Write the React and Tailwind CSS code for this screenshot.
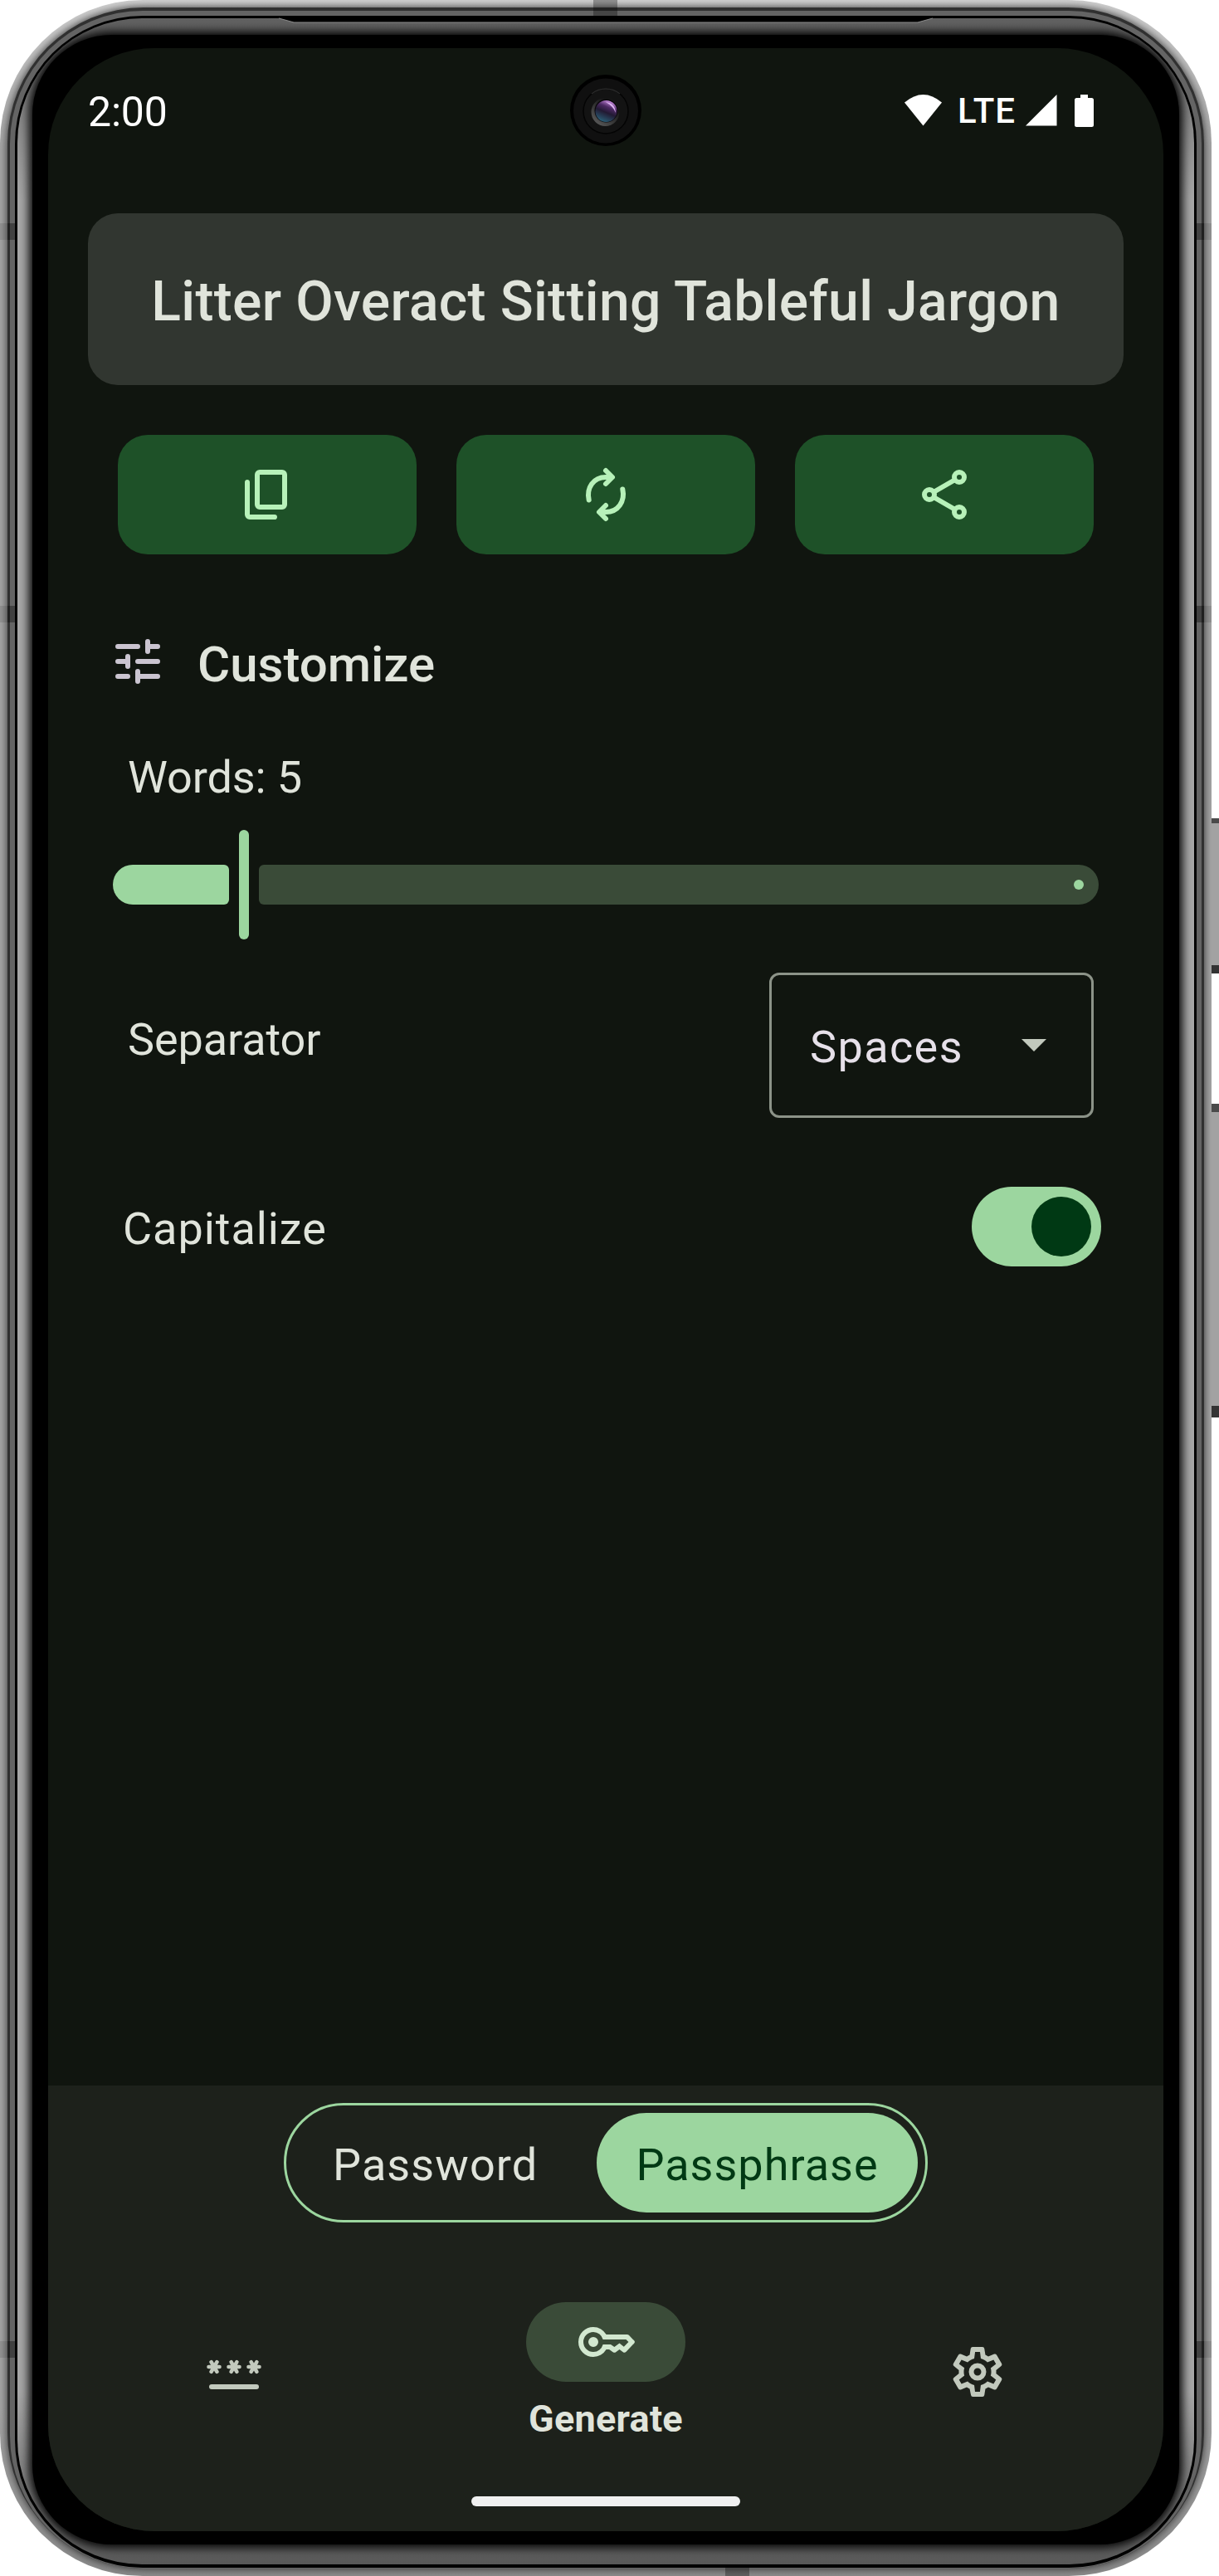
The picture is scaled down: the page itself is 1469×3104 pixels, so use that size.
import React from "react";

const CopyIcon = () => (
  <svg className="size-[72px]" viewBox="0 -960 960 960" fill="#b7f1b9">
    <path d="M360-240q-33 0-56.500-23.500T280-320v-480q0-33 23.500-56.500T360-880h360q33 0 56.500 23.500T800-800v480q0 33-23.500 56.500T720-240H360Zm0-80h360v-480H360v480ZM200-80q-33 0-56.500-23.500T120-160v-520q0-17 11.500-28.500T160-720q17 0 28.500 11.500T200-680v520h400q17 0 28.500 11.500T640-120q0 17-11.500 28.500T600-80H200Z" />
  </svg>
);

const RefreshIcon = () => (
  <svg className="size-[72px]" viewBox="0 0 72 72" fill="none" stroke="#b7f1b9" strokeWidth="6" strokeLinecap="round" strokeLinejoin="round">
    <path d="M15.700 42.500C12.500 28 21 15 36 15H43M36 7l8 8-8 8" />
    <path d="M56.300 29.500C59.500 44 51 57 36 57H29M36 65l-8-8 8-8" />
  </svg>
);

const ShareIcon = () => (
  <svg className="size-[72px]" viewBox="0 0 72 72" fill="none" stroke="#b7f1b9" strokeWidth="6">
    <path d="M23 33 49 18M23 39 49 54" />
    <circle cx="18" cy="36" r="6" />
    <circle cx="54" cy="15" r="6" />
    <circle cx="54" cy="57" r="6" />
  </svg>
);

const TuneIcon = () => (
  <svg className="size-[72px]" viewBox="0 0 72 72" fill="none" stroke="#cac4d0" strokeWidth="6" strokeLinecap="round">
    <path d="M12 18H36M48 12V24M48 18H60M12 36H24M24 30V42M36 36H60M12 54H24M36 48V60M36 54H60" />
  </svg>
);

const Asterisk = ({ x }) => (
  <path d={`M${x - 6.500} 30h13M${x - 3.400} 24.200l6.800 11.600M${x + 3.400} 24.200l-6.800 11.600`} strokeWidth="4.600" />
);

const PasswordIcon = () => (
  <svg className="size-[72px]" viewBox="0 0 72 72" fill="none" stroke="#c2c9bd" strokeLinecap="round">
    <Asterisk x={12} />
    <Asterisk x={36} />
    <Asterisk x={60} />
    <path d="M9 54H63" strokeWidth="6" />
  </svg>
);

const KeyIcon = () => (
  <svg className="size-[72px]" viewBox="0 -960 960 960" fill="#d2e8d0">
    <path d="M280-400q-33 0-56.500-23.500T200-480q0-33 23.500-56.500T280-560q33 0 56.500 23.500T360-480q0 33-23.500 56.500T280-400Zm0 160q-100 0-170-70T40-480q0-100 70-170t170-70q67 0 121.500 33t86.500 87H823q16 0 28 11l84 86q22 23 0 46L808-324q-24 22-50 6l-58-42-58 42q-22 14-46 0l-61-42h-47q-32 54-86.500 87T280-240Zm0-80q56 0 98.500-34t56.500-86h125l58 41 82-61 71 55 75-75-40-40H435q-14-52-56.500-86T280-640q-66 0-113 47t-47 113q0 66 47 113t113 47Z" />
  </svg>
);

const GearIcon = () => (
  <svg className="size-[72px]" viewBox="0 -960 960 960" fill="#c2c9bd">
    <path d="M405-80q-27 0-31-26l-20-102q-13-5-24.500-12T307-235l-95 40q-25 9-40-14L92-347q-12-24 8-40l81-66q-1-7-1-13.500v-27q0-6.500 1-13.500l-81-66q-20-16-8-40l80-138q15-23 40-14l95 40q11-8 23-15t24-12l16-102q5-26 31-26h158q27 0 31 26l16 102q13 5 24.500 12t22.500 15l95-40q25-9 40 14l80 138q12 24-8 40l-81 66q1 7 1 13.500v27q0 6.500-2 13.500l82 66q20 16 8 40l-80 138q-15 23-40 14l-95-40q-11 8-23 15t-24 12l-16 102q-4 26-31 26H405Zm35-80h79l14-106q31-8 57.500-23.500T639-327l99 41 39-68-86-65q5-14 7-29.500t2-31.500q0-16-2-31.500t-7-29.500l86-65-39-68-99 42q-22-23-48.500-38.500T533-694l-13-106h-79l-14 106q-31 8-57.500 23.500T321-633l-99-41-39 68 86 64q-5 15-7 30t-2 32q0 16 2 31t7 30l-86 65 39 68 99-42q22 23 48.500 38.500T427-266l13 106Z" />
    <circle cx="480" cy="-480" r="100" fill="none" stroke="#c2c9bd" strokeWidth="80" />
  </svg>
);

const Camera = () => (
  <svg className="absolute left-[629px] top-[32px] size-[86px]" viewBox="0 0 86 86">
    <defs>
      <linearGradient id="lens" x1="0.750" y1="0.050" x2="0.350" y2="1">
        <stop offset="0" stopColor="#c98be0" />
        <stop offset="0.300" stopColor="#4b2862" />
        <stop offset="0.550" stopColor="#221a33" />
        <stop offset="1" stopColor="#2b6078" />
      </linearGradient>
      <linearGradient id="rim" x1="1" y1="0" x2="0.200" y2="1">
        <stop offset="0.300" stopColor="#161616" />
        <stop offset="1" stopColor="#5c5c5c" />
      </linearGradient>
    </defs>
    <circle cx="43" cy="43" r="43" fill="#000" />
    <circle cx="43" cy="43.500" r="39" fill="#101010" />
    <circle cx="43" cy="44" r="27" fill="#131313" stroke="#040404" strokeWidth="1.500" />
    <path d="M26 23A27 27 0 0 1 60 23" fill="none" stroke="#2a2a2a" strokeWidth="1.500" />
    <circle cx="42.500" cy="45" r="17" fill="url(#rim)" />
    <circle cx="43.500" cy="43.500" r="14" fill="#0a070c" />
    <circle cx="43.500" cy="44" r="13" fill="url(#lens)" />
    <path d="M43 33Q54 34 55 46Q52 38 43 33Z" fill="#dcb4f0" />
  </svg>
);

const AntennaBand = ({ className }) => (
  <div className={`absolute left-0 h-[20px] w-full border-x-[9px] border-x-black/10 bg-black/35 bg-clip-padding ${className}`} />
);

function DeviceFrame() {
  return (
    <div className="absolute inset-0">
      {/* side buttons */}
      <div className="absolute left-[1458px] top-[986px] h-[187px] w-[11px] border-b-[10px] border-t-[6px] border-b-[#333] border-t-[#4a4a4a] bg-[#a2a2a2]" />
      <div className="absolute left-[1458px] top-[1330px] h-[378px] w-[11px] border-b-[14px] border-t-[10px] border-b-[#333] border-t-[#4a4a4a] bg-[#a2a2a2]" />
      {/* metal rails, from the outside in */}
      <div className="absolute left-0 top-0 h-[3104px] w-[1460px] overflow-hidden rounded-[172px] bg-[linear-gradient(#cfcfcf,#a4a4a4_180px,#a4a4a4_2900px,#8a8a8a)]">
        <div className="absolute inset-[9px] rounded-[164px] bg-[#303030] shadow-[0_0_8px_1px_rgba(40,40,40,0.8)]" />
        <div className="absolute inset-x-[12px] bottom-[9px] top-[13px] rounded-[160px] bg-[#646464]" />
        <div className="absolute left-[715px] top-0 h-[19px] w-[29px] bg-black/30" />
        <div className="absolute left-[874px] top-[3094px] h-[10px] w-[29px] bg-black/30" />
        <AntennaBand className="top-[269px]" />
        <AntennaBand className="top-[730px]" />
        <AntennaBand className="top-[2821px]" />
        <div className="absolute inset-x-[18px] bottom-[10px] top-[19px] rounded-[154px] bg-black" />
        <div className="absolute inset-x-[21px] bottom-[14px] top-[22px] overflow-hidden rounded-[150px] bg-[linear-gradient(#606060,#a8a8a8_220px,#a8a8a8_2860px,#585858)]">
          <div className="absolute inset-x-[18px] bottom-[24px] top-[20px] rounded-[96px] bg-black shadow-[0_0_12px_4px_#000]" />
        </div>
      </div>
      {/* earpiece slot */}
      <svg className="absolute left-[336px] top-[19px]" width="788" height="10" viewBox="0 0 788 10">
        <path d="M0 3 18 8H770L788 3V1H0Z" fill="#000" />
        <path d="M0 3 18 8H770L788 3" fill="none" stroke="#8a8a8a" strokeWidth="1.200" />
      </svg>
    </div>
  );
}

const StatusBar = () => (
  <div className="flex h-[150px] items-center justify-between pl-[48px] pr-[84px] text-white">
    <span className="pt-[4px] text-[50px] leading-none tracking-[-0.2px]">2:00</span>
    <div className="flex items-center">
      <svg className="mr-[19px] h-[38px] w-[45px]" viewBox="0 0 45 38" fill="#fff">
        <path d="M0 9.500Q22.500-9.500 45 9.500L22.500 37.500Z" />
      </svg>
      <span className="w-[70px] pt-[1px] text-[42px] font-medium leading-none tracking-[1.100px]">LTE</span>
      <svg className="ml-[12px] h-[38px] w-[38px]" viewBox="0 0 38 38" fill="#fff">
        <path d="M0 37.500 37.500 0V37.500Z" />
      </svg>
      <svg className="ml-[21px] h-[39px] w-[23px]" viewBox="0 0 23 39" fill="#fff">
        <path d="M7 0h9v4h4.500q2.500 0 2.500 2.500v30q0 2.500-2.500 2.500h-18Q0 39 0 36.500v-30Q0 4 2.500 4H7Z" />
      </svg>
    </div>
  </div>
);

const Action = ({ children }) => (
  <button className="flex h-[144px] flex-1 items-center justify-center rounded-[36px] bg-[#1e5128]">{children}</button>
);

export default function App() {
  return (
    <div className="relative h-[3104px] w-[1469px] overflow-hidden bg-white font-[Roboto,sans-serif]">
      <DeviceFrame />
      <div className="relative ml-[58px] pt-[58px]">
        <div className="relative flex h-[2992px] w-[1344px] flex-col overflow-hidden rounded-[128px] bg-[#10150f] text-[54px] leading-none text-[#e0e4db]">
          <Camera />
          <StatusBar />

          <div className="mx-[48px] mt-[49px] flex h-[207px] shrink-0 items-center justify-center rounded-[36px] bg-[#313630] pt-[6px] text-[66px] font-medium tracking-[0.340px] whitespace-nowrap">
            Litter Overact Sitting Tableful Jargon
          </div>

          <div className="mx-[84px] mt-[60px] flex gap-[48px]">
            <Action><CopyIcon /></Action>
            <Action><RefreshIcon /></Action>
            <Action><ShareIcon /></Action>
          </div>

          <div className="mt-[93px] flex h-[72px] items-center pl-[72px]">
            <TuneIcon />
            <h2 className="ml-[36px] pt-[7px] text-[60px] font-medium leading-none">Customize</h2>
          </div>

          <div className="mt-[68px] flex h-[71px] items-center pl-[96px] tracking-[-0.100px]">Words: 5</div>

          <div className="mx-[78px] mt-[28px] flex h-[132px] items-center gap-[12px]">
            <div className="h-[48px] w-[140px] rounded-l-[24px] rounded-r-[6px] bg-[#9cd69f]" />
            <div className="h-[132px] w-[12px] rounded-full bg-[#9cd69f]" />
            <div className="flex h-[48px] flex-1 items-center justify-end rounded-l-[6px] rounded-r-[24px] bg-[#3a4b38] pr-[18px]">
              <div className="size-[12px] rounded-full bg-[#9cd69f]" />
            </div>
          </div>

          <div className="mt-[40px] flex h-[175px] justify-between pl-[96px] pr-[84px]">
            <span className="mt-[53.500px] tracking-[-0.100px]">Separator</span>
            <div className="flex w-[391px] items-center justify-between rounded-[12px] border-[3px] border-[#8c9388] pl-[46px] pr-[54px] text-[#e6e0e9]">
              <span className="pt-[5px] tracking-[1.400px]">Spaces</span>
              <svg className="h-[15px] w-[30px]" viewBox="0 0 30 15" fill="#c2c9bd">
                <path d="M0 0H30L15 15Z" />
              </svg>
            </div>
          </div>

          <div className="mt-[83px] flex h-[96px] items-center justify-between pl-[90px] pr-[75px]">
            <span className="pt-[5px] tracking-[0.950px]">Capitalize</span>
            <div className="flex h-[96px] w-[156px] items-center justify-end rounded-full bg-[#9cd69f] pr-[12px]">
              <div className="size-[72px] rounded-full bg-[#003914]" />
            </div>
          </div>

          <div className="mt-auto flex h-[537px] flex-col items-center bg-[#1d211b]">
            <div className="mt-[21px] flex h-[144px] w-[776px] shrink-0 items-center justify-between rounded-full border-[3px] border-[#9cd69f] pl-[56px] pr-[9px]">
              <span className="pt-[5px] tracking-[1.100px]">Password</span>
              <span className="flex h-[120px] w-[387px] items-center justify-center rounded-full bg-[#9cd69f] pt-[5px] tracking-[1px] text-[#003914]">Passphrase</span>
            </div>
            <nav className="mt-[96px] grid h-[168px] w-full grid-cols-3 items-center justify-items-center">
              <PasswordIcon />
              <div className="flex h-[168px] flex-col items-center">
                <div className="flex h-[96px] w-[192px] items-center justify-center rounded-full bg-[#3a4b38]">
                  <KeyIcon />
                </div>
                <span className="mt-[22px] text-[45px] font-bold leading-none tracking-[0.250px]">Generate</span>
              </div>
              <GearIcon />
            </nav>
            <div className="mt-[66px] h-[12px] w-[324px] rounded-full bg-[#f0f0f0]" />
          </div>
        </div>
      </div>
    </div>
  );
}
